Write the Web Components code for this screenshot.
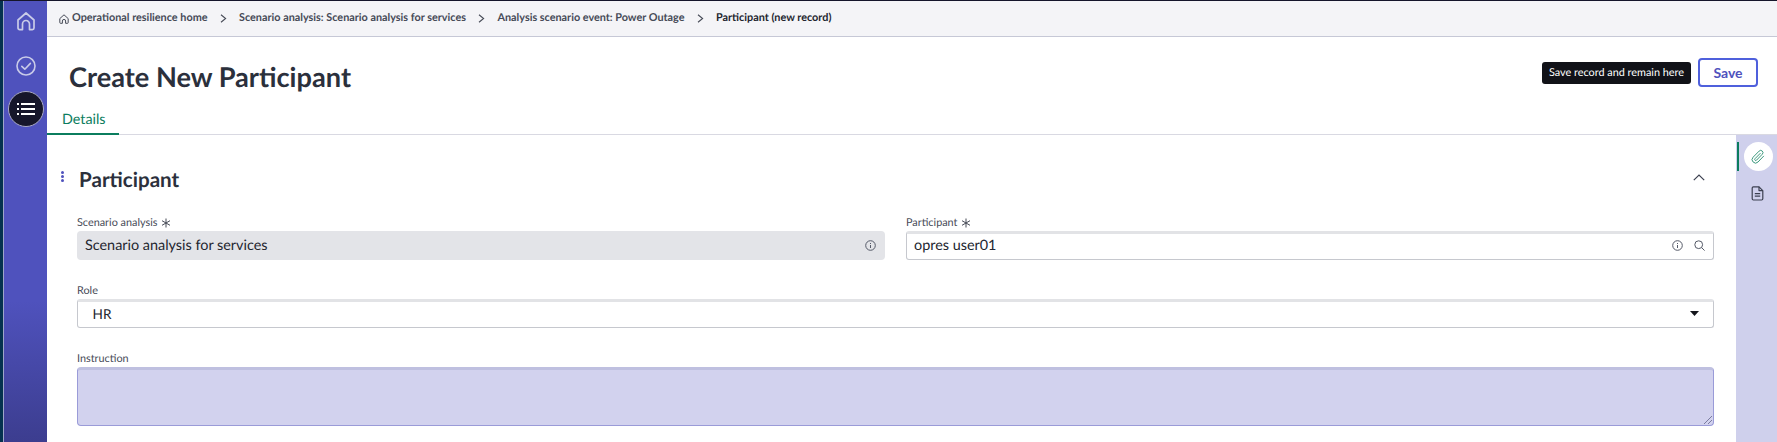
<!DOCTYPE html>
<html>
<head>
<meta charset="utf-8">
<title>Create New Participant</title>
<style>
  html, body { margin: 0; height: 100%; background: #fff; overflow: hidden; }
  body { font-family: Lato, "Liberation Sans", sans-serif; color: #2e3440; text-rendering: geometricPrecision; }
  app-shell { height: 442px; }
</style>
</head>
<body>

<template id="app-shell-tpl">
  <style>
    :host { display: flex; flex-direction: column; width: 1777px; background: #fff; }
    .topline { height: 1px; background: #15152b; flex: none; }
    .row { display: flex; flex: 1; min-height: 0; }
    .main { flex: 1; min-width: 0; display: flex; flex-direction: column; }
  </style>
  <div class="topline"></div>
  <div class="row">
    <slot name="nav"></slot>
    <div class="main"><slot></slot></div>
  </div>
</template>

<template id="side-nav-tpl">
  <style>
    :host { display: flex; flex: none; width: 47px; height: 441px; background: #4f52bd; }
    .edge { width: 3px; background: #05324f; border-right: 1px solid #9fa6c8; flex: none; }
    .bar { flex: 1; display: flex; flex-direction: column; align-items: center; padding-top: 3px; gap: 7.5px;
      background: linear-gradient(#4f52bd 0, #4f52bd 300px, #3c3d8f 441px); }
    .item { width: 36px; height: 36px; display: flex; align-items: center; justify-content: center; border-radius: 50%; box-sizing: border-box; }
    .item.active { background: #16162a; border: 1px solid #a9a9c4; }
    .home { margin-top: -2px; }
    svg { display: block; }
  </style>
  <div class="edge"></div>
  <div class="bar">
    <div class="item">
      <svg class="home" width="22" height="22" viewBox="0 0 22 22" fill="none" stroke="#c9cbe8" stroke-width="1.7" stroke-linejoin="round" stroke-linecap="round">
        <path d="M3 10 11 3l8 7v8a1.6 1.6 0 0 1-1.6 1.6H14.5V14a3.5 3.5 0 0 0-7 0v5.6H4.6A1.6 1.6 0 0 1 3 18z"/>
      </svg>
    </div>
    <div class="item">
      <svg width="22" height="22" viewBox="0 0 22 22" fill="none" stroke="#c9cbe8" stroke-width="1.6" stroke-linejoin="round" stroke-linecap="round">
        <circle cx="11" cy="11" r="9"/><path d="M6.8 11.4 9.8 14.2 15.4 8.4"/>
      </svg>
    </div>
    <div class="item active">
      <svg width="18" height="14" viewBox="0 0 18 14" fill="none" stroke="#fff" stroke-width="1.8">
        <path d="M0 2h2M4 2h14M0 7h2M4 7h14M0 12h2M4 12h14"/>
      </svg>
    </div>
  </div>
</template>

<template id="bread-crumbs-tpl">
  <style>
    :host { display: flex; align-items: center; flex: none; height: 35px; background: #f4f4f7;
      border-bottom: 1px solid #c6c8d6; padding-left: 12px; font: 700 10.85px/1 Lato, sans-serif; color: #474b57; }
    svg { flex: none; margin-right: 3px; }
  </style>
  <svg width="10" height="10" viewBox="0 0 10 10" fill="none" stroke="#474b57" stroke-width="1" stroke-linejoin="round">
    <path d="M.8 4.6 5 .8l4.2 3.8v4a.7.7 0 0 1-.7.7H6.6V7a1.6 1.6 0 0 0-3.2 0v2.3H1.5a.7.7 0 0 1-.7-.7z"/>
  </svg>
  <slot></slot>
</template>

<template id="crumb-item-tpl">
  <style>
    :host { display: inline-flex; align-items: center; white-space: nowrap; }
    :host([current]) { color: #23262f; }
    .sep { display: none; justify-content: center; }
    :host([sep]) .sep { display: inline-flex; width: 31.5px; }
  </style>
  <span class="sep"><svg width="7" height="9" viewBox="0 0 7 9" fill="none" stroke="#474b57" stroke-width="1.1"><path d="M1 .8 5.6 4.5 1 8.2"/></svg></span>
  <slot></slot>
</template>

<template id="page-header-tpl">
  <style>
    :host { display: flex; align-items: flex-start; justify-content: space-between; flex: none; height: 73px; padding: 0 19px 0 22px; box-sizing: border-box; }
    h1 { margin: 26px 0 0; font: 700 27.2px/1 Lato, sans-serif; color: #2b303c; }
    .right { display: flex; align-items: center; gap: 7px; margin-top: 21px; }
    .tip { background: #111218; color: #fff; font: 400 10.85px/22px Lato, sans-serif; padding: 0 7px; border-radius: 3px; white-space: nowrap; height: 22px; }
    .save { box-sizing: border-box; width: 60px; height: 29px; border: 2px solid #4f60dc; border-radius: 4px; background: #fff; color: #4f52bd; font: 700 14px/1 Lato, sans-serif; padding: 0; }
  </style>
  <h1><slot></slot></h1>
  <div class="right">
    <span class="tip">Save record and remain here</span>
    <button class="save">Save</button>
  </div>
</template>

<template id="tab-bar-tpl">
  <style>
    :host { display: flex; flex: none; height: 24px; border-bottom: 1px solid #d9d9e2; }
    .tab { box-sizing: border-box; width: 72px; height: 25px; padding: 3px 0 0 15px; font: 400 14.3px/1 Lato, sans-serif; color: #0b7d5e; border-bottom: 2px solid #0b7d5e; }
  </style>
  <div class="tab"><slot></slot></div>
</template>

<template id="record-body-tpl">
  <style>
    :host { display: flex; flex: 1; min-height: 0; }
    .content { flex: 1; min-width: 0; }
    .rail { flex: none; width: 41px; background: #cfd0ec; position: relative; display: flex; flex-direction: column; align-items: center; padding: 7px 0 0 3px; box-sizing: border-box; gap: 8px; margin-left: 22px; }
    .rail .tick { position: absolute; left: 1px; top: 7px; width: 2px; height: 29px; background: #0b7d5e; }
    .btn { width: 29px; height: 29px; border-radius: 50%; display: flex; align-items: center; justify-content: center; }
    .btn.on { background: #fff; }
    .doc { margin-left: -1px; }
  </style>
  <div class="content"><slot></slot></div>
  <div class="rail">
    <span class="tick"></span>
    <div class="btn on">
      <svg width="16" height="16" viewBox="0 0 16 16" fill="none" stroke="#3d9a7e" stroke-width="1" stroke-linecap="round" stroke-linejoin="round">
        <path d="M13.6 7.2 8 13a3.4 3.4 0 0 1-4.9-4.8l6-6.1a2.2 2.2 0 0 1 3.2 3.1l-5.8 6a1 1 0 0 1-1.5-1.5l5.2-5.3"/>
      </svg>
    </div>
    <div class="btn">
      <svg class="doc" width="13" height="15" viewBox="0 0 13 15" fill="none" stroke="#3c4050" stroke-width="1.2" stroke-linejoin="round">
        <path d="M1.2 2A1.2 1.2 0 0 1 2.4.8H8l3.8 3.8v8.2A1.2 1.2 0 0 1 10.6 14H2.4a1.2 1.2 0 0 1-1.2-1.2z"/>
        <path d="M8 .8v3.8h3.8M3.8 7.6h5.4M3.8 10.2h5.4"/>
      </svg>
    </div>
  </div>
</template>

<template id="form-section-tpl">
  <style>
    :host { display: block; position: relative; padding: 30px 0 0 30px; }
    .head { display: flex; align-items: center; justify-content: space-between; height: 30px; margin-bottom: 20px; }
    h2 { margin: 0; font: 700 20.6px/1 Lato, sans-serif; color: #2b303c; padding-left: 2px; }
    .dots { position: absolute; left: 14px; top: 36px; display: grid; gap: 1px; }
    .dots i { width: 3px; height: 3px; border-radius: 50%; background: #4f52bd; display: block; }
    .chev { margin-right: 9px; position: relative; top: -3px; }
    .grid { display: grid; grid-template-columns: 808px 808px; column-gap: 21px; row-gap: 23px; }
  </style>
  <span class="dots"><i></i><i></i><i></i></span>
  <div class="head">
    <h2><slot name="title"></slot></h2>
    <svg class="chev" width="12" height="7" viewBox="0 0 12 7" fill="none" stroke="#3c4050" stroke-width="1.2"><path d="M.8 6.2 6 1l5.2 5.2"/></svg>
  </div>
  <div class="grid"><slot></slot></div>
</template>

<template id="form-field-tpl">
  <style>
    :host { display: block; min-width: 0; }
    :host([wide]) { grid-column: 1 / -1; }
    label { display: flex; align-items: center; gap: 4px; height: 14px; margin: 1px 0; font: 400 10.85px/14px Lato, sans-serif; color: #474b57; }
    .req { display: none; }
    :host([required]) .req { display: block; }
    .box { box-sizing: border-box; height: 29px; display: flex; align-items: center; border: 1px solid #c6c8ce; border-top: 3px solid #e2e3e6; border-radius: 3px; padding: 0 8px 0 7px; background: #fff; font: 400 14.4px/1 Lato, sans-serif; color: #23262f; position: relative; }
    .box .val { flex: 1; }
    .icons { display: flex; align-items: center; gap: 11px; position: relative; top: -1px; }
    :host([type=readonly]) .box { background: #e3e4e8; border: none; border-radius: 4px; padding: 0 9px 0 8px; }
    :host([type=readonly]) .val { position: relative; top: 1px; }
    :host([type=readonly]) .icons { top: 0; }
    :host([type=select]) .box { padding-left: 14.5px; padding-right: 14px; font-size: 13.6px; }
    :host([type=textarea]) .box { height: 59px; background: #d2d2ee; border: 1px solid #9a9bd8; border-top: 3px solid #bfc0e0; border-radius: 4px; }
    .grip { display: none; position: absolute; right: 1px; bottom: 1px; }
    :host([type=textarea]) .grip { display: block; }
    svg { display: block; }
  </style>
  <label><span><slot name="label"></slot></span>
    <svg class="req" width="10" height="10" viewBox="0 0 10 10" fill="none" stroke="#474b57" stroke-width="1"><path d="M5 .5v9M1 2.7l8 4.6M9 2.7 1 7.3"/></svg>
  </label>
  <div class="box">
    <span class="val"><slot></slot></span>
    <span class="icons"><slot name="icons"></slot></span>
    <svg class="grip" width="8" height="8" viewBox="0 0 8 8" fill="none" stroke="#63648c" stroke-width=".8"><path d="M0 8 8 0M4 8l4-4"/></svg>
  </div>
</template>

<script>
  function stamp(tagName, tplId) {
    const tpl = document.querySelector(tplId);
    customElements.define(tagName, class extends HTMLElement {
      constructor() {
        super();
        this.attachShadow({ mode: "open" });
        this.shadowRoot.appendChild(tpl.content.cloneNode(true));
      }
    });
  }
  stamp("app-shell", "#app-shell-tpl");
  stamp("side-nav", "#side-nav-tpl");
  stamp("bread-crumbs", "#bread-crumbs-tpl");
  stamp("crumb-item", "#crumb-item-tpl");
  stamp("page-header", "#page-header-tpl");
  stamp("tab-bar", "#tab-bar-tpl");
  stamp("record-body", "#record-body-tpl");
  stamp("form-section", "#form-section-tpl");
  stamp("form-field", "#form-field-tpl");
</script>

<app-shell>
  <side-nav slot="nav"></side-nav>
  <bread-crumbs>
    <crumb-item>Operational resilience home</crumb-item>
    <crumb-item sep>Scenario analysis: Scenario analysis for services</crumb-item>
    <crumb-item sep>Analysis scenario event: Power Outage</crumb-item>
    <crumb-item sep current>Participant (new record)</crumb-item>
  </bread-crumbs>
  <page-header>Create New Participant</page-header>
  <tab-bar>Details</tab-bar>
  <record-body>
    <form-section>
      <span slot="title">Participant</span>
      <form-field type="readonly" required>
        <span slot="label">Scenario analysis</span>
        Scenario analysis for services
        <svg slot="icons" width="11" height="11" viewBox="0 0 11 11" fill="none" stroke="#555a68" stroke-width="1"><circle cx="5.5" cy="5.5" r="4.8"/><path d="M5.5 5v3M5.5 3v1"/></svg>
      </form-field>
      <form-field required>
        <span slot="label">Participant</span>
        opres user01
        <svg slot="icons" width="11" height="11" viewBox="0 0 11 11" fill="none" stroke="#555a68" stroke-width="1"><circle cx="5.5" cy="5.5" r="4.8"/><path d="M5.5 5v3M5.5 3v1"/></svg>
        <svg slot="icons" width="11" height="11" viewBox="0 0 11 11" fill="none" stroke="#555a68" stroke-width="1"><circle cx="4.7" cy="4.7" r="3.9"/><path d="M7.6 7.6 10.6 10.6"/></svg>
      </form-field>
      <form-field wide type="select">
        <span slot="label">Role</span>
        HR
        <svg slot="icons" width="9" height="5" viewBox="0 0 9 5"><path d="M0 0h9L4.5 5z" fill="#15161c"/></svg>
      </form-field>
      <form-field wide type="textarea">
        <span slot="label">Instruction</span>
      </form-field>
    </form-section>
  </record-body>
</app-shell>

</body>
</html>
